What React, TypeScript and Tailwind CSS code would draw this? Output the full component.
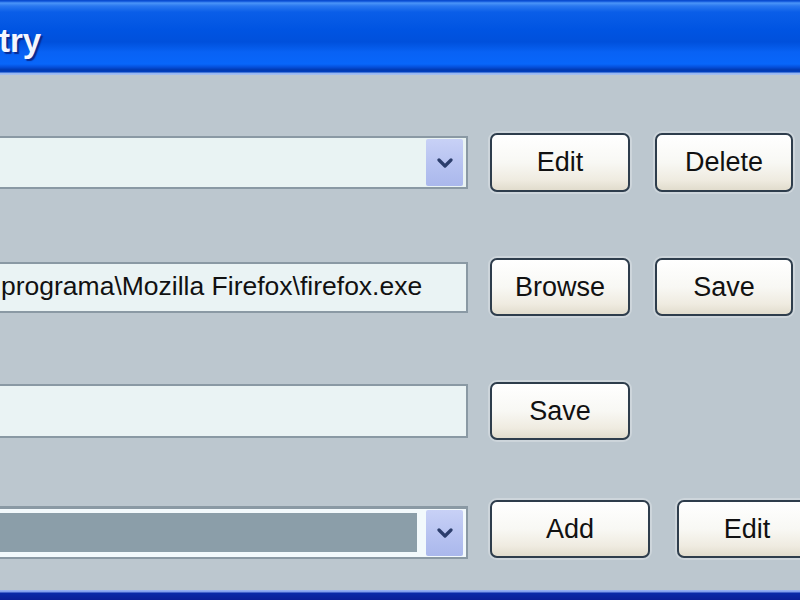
import React from "react";

const font = { fontFamily: '"Liberation Sans", Arial, sans-serif' };

function Chevron() {
  return (
    <svg width="16" height="10" viewBox="0 0 16 10">
      <path d="M2 2 L8 8 L14 2" fill="none" stroke="#2b3d6b" strokeWidth="3.2" strokeLinecap="round" strokeLinejoin="round" />
    </svg>
  );
}

function DropBtn() {
  return (
    <div className="w-[37px] self-stretch shrink-0 flex items-center justify-center rounded-[2px] bg-[linear-gradient(180deg,#c8d1f6_0%,#b5c1f0_60%,#aab8ec_100%)]">
      <Chevron />
    </div>
  );
}

function XPButton({ label, w, h = "h-[58px]" }: { label: string; w: string; h?: string }) {
  return (
    <div
      className={`${w} ${h} shrink-0 flex items-center justify-center rounded-[7px] border-2 border-[#2e3d4c] bg-[linear-gradient(180deg,#ffffff_0%,#f8f8f4_50%,#efebe0_82%,#e1dccd_100%)] shadow-[0_0_0_2px_rgba(255,255,255,0.25)] text-[27px] text-[#111]`}
      style={font}
    >
      {label}
    </div>
  );
}

export default function App() {
  return (
    <div className="w-[800px] h-[600px] overflow-hidden flex flex-col bg-[#bcc7cf]" style={font}>
      {/* Title bar */}
      <div className="h-[75px] shrink-0 flex items-center bg-[linear-gradient(180deg,#0a48c8_0px,#0a50d8_1px,#4b95f8_3px,#2a78f0_6px,#0a5ee8_12px,#0054e2_30px,#0050dc_42px,#0862f4_52px,#0866fa_64px,#0550dc_67px,#0038b0_70px,#0040c0_72px,#8fb2f2_73px,#a6c0f0_75px)]">
        <span className="-ml-[1px] mt-[6px] text-[33px] font-bold text-[#f4f6ff] [text-shadow:2px_2px_1px_#0a2a90]">try</span>
      </div>

      {/* Body */}
      <div className="flex-1 flex flex-col overflow-hidden">
        {/* Row 1 */}
        <div className="mt-[58px] h-[59px] flex items-center">
          <div className="-ml-[2px] w-[470px] h-[53px] shrink-0 border-2 border-[#8a99a4] bg-[#e9f3f3] flex justify-end p-[1px] pr-[3px] py-[1px]">
            <DropBtn />
          </div>
          <div className="ml-[22px]"><XPButton label="Edit" w="w-[140px]" h="h-[59px]" /></div>
          <div className="ml-[25px]"><XPButton label="Delete" w="w-[138px]" h="h-[59px]" /></div>
        </div>

        {/* Row 2 */}
        <div className="mt-[66px] h-[58px] flex items-center">
          <div className="-ml-[2px] w-[470px] h-[51px] shrink-0 border-2 border-[#8a99a4] bg-[#eaf3f4] flex items-center overflow-hidden">
            <span className="ml-[1px] whitespace-nowrap text-[26.5px] text-[#111]">programa\Mozilla Firefox\firefox.exe</span>
          </div>
          <div className="ml-[22px]"><XPButton label="Browse" w="w-[140px]" /></div>
          <div className="ml-[25px]"><XPButton label="Save" w="w-[138px]" /></div>
        </div>

        {/* Row 3 */}
        <div className="mt-[66px] h-[58px] flex items-center">
          <div className="-ml-[2px] w-[470px] h-[54px] shrink-0 border-2 border-[#8a99a4] bg-[#eaf3f4]" />
          <div className="ml-[22px]"><XPButton label="Save" w="w-[140px]" /></div>
        </div>

        {/* Row 4 */}
        <div className="mt-[60px] h-[58px] flex items-center">
          <div className="-ml-[2px] w-[470px] h-[53px] shrink-0 mt-[6px] border-2 border-t-[3px] border-[#8a99a4] bg-[#f2f9fc] flex items-stretch pl-0 pr-[3px] pt-[1px] pb-[1px] gap-[9px]">
            <div className="flex-1 mt-[3px] mb-[4px] bg-[#8b9ea9]" />
            <DropBtn />
          </div>
          <div className="ml-[22px]"><XPButton label="Add" w="w-[160px]" /></div>
          <div className="ml-[27px]"><XPButton label="Edit" w="w-[140px]" /></div>
        </div>
      </div>

      {/* Bottom border */}
      <div className="h-[10px] shrink-0 bg-[linear-gradient(180deg,#9cb6f2_0px,#7a98ec_2px,#0a2aa8_3px,#0a1f98_10px)]" />
    </div>
  );
}
